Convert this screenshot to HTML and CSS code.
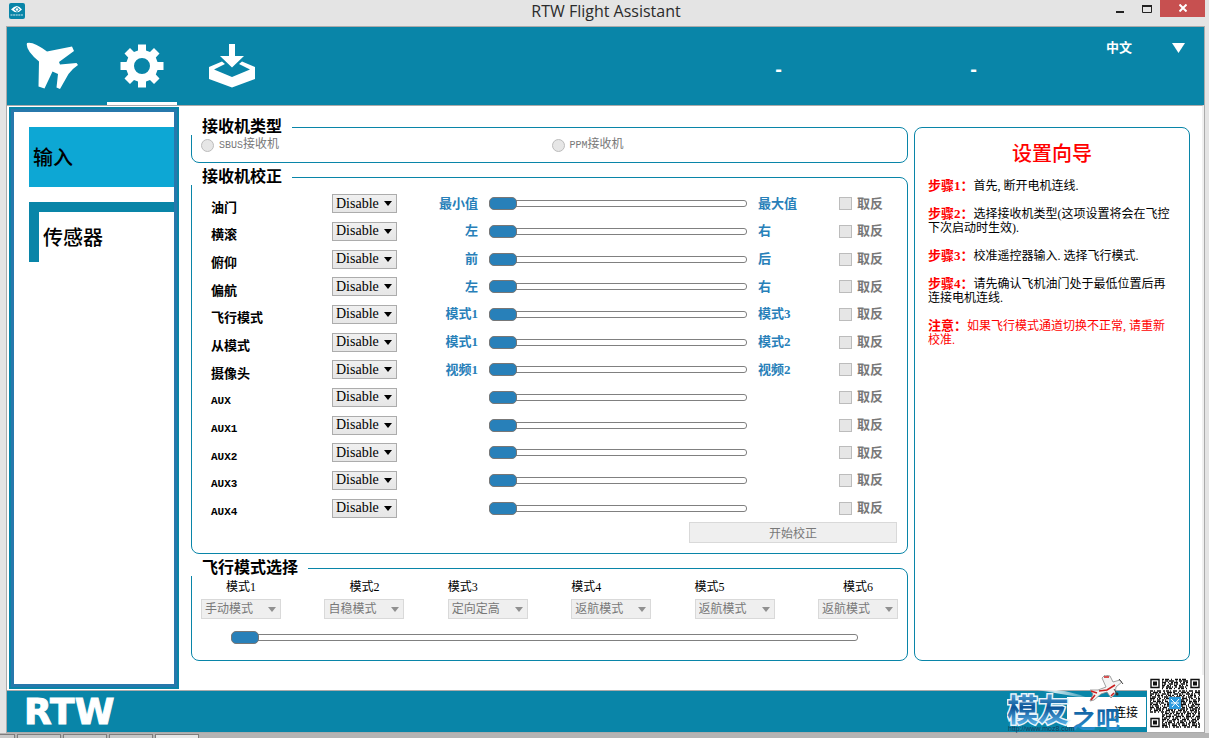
FILE: index.html
```html
<!DOCTYPE html>
<html lang="zh-CN">
<head>
<meta charset="utf-8">
<title>RTW Flight Assistant</title>
<link rel="stylesheet" href="styles.css">
</head>
<body>
<div class="window">
  <header class="titlebar">
    <svg class="app-icon" viewBox="0 0 16 16" aria-hidden="true"><rect width="16" height="16" rx="2" fill="#0985a8"/><path d="M2 6.500Q8-.5 13 6.500Q8 12 2 6.500Z" fill="#fff"/><path d="M5 6.500 8 4l3 2.500L8 9Z" fill="#0985a8"/><circle cx="8" cy="6.500" r="1.300" fill="#fff"/><path d="M1.500 12h13" stroke="#cfe8ef" stroke-width="1.200" stroke-dasharray="2 .6"/></svg>
    <h1 class="window-title">RTW Flight Assistant</h1>
    <div class="window-buttons">
      <button class="win-btn" type="button" aria-label="Minimize"><svg width="10" height="12"><path d="M1 10h8" stroke="#222" stroke-width="2"/></svg></button>
      <button class="win-btn" type="button" aria-label="Maximize"><svg width="10" height="12"><path d="M.5 4v6.500h9V4" fill="none" stroke="#222"/><path d="M0 4h10" stroke="#222" stroke-width="2"/></svg></button>
      <button class="win-btn close" type="button" aria-label="Close"><svg width="8" height="8"><path d="M.5.500l7 7M7.500.500l-7 7" stroke="#fff" stroke-width="2"/></svg></button>
    </div>
  </header>

  <div class="client">
    <div class="toolbar">
      <nav class="tabs">
        <button class="tab" type="button" aria-label="Flight"><svg width="52" height="48" viewBox="0 0 52 48"><path d="M1 1Q7-1 21 9.500L46 4.500 48 9 33 20 34 22.500 50.500 21 52 23Q46 27 42.500 32L34 47 30.500 45.500 32 32 26.500 29.500 18.500 46.500 12.500 44.500 13 19.500Q-1 8 1 1Z"/></svg></button>
        <button class="tab active" type="button" aria-label="Settings"><svg width="44" height="44" viewBox="-22 -22 44 44"><path fill-rule="evenodd" d="M-4-21.500H4V-15.500L8-14 12-18 17.500-12.500 13.800-8.500 15.500-4H21.500V4H15.500L13.800 8.500 17.500 12.500 12 18 8 14 4 15.500V21.500H-4V15.500L-8 14-12 18-17.500 12.500-13.800 8.500-15.500 4H-21.500V-4H-15.500L-13.800-8.500-17.500-12.500-12-18-8-14-4-15.500ZM8 0A8 8 0 1 0-8 0 8 8 0 1 0 8 0Z"/></svg></button>
        <button class="tab" type="button" aria-label="Download"><svg width="46" height="44" viewBox="0 0 46 44"><path d="M20 0h6v12h9L23 23.500 11 12h9ZM0 23 13 17.500 16 20 5 25.500 23 33 41 25.500 30 20 33 17.500 46 23V35L23 43.500 0 35Z"/></svg></button>
      </nav>
      <div class="readouts"><span>-</span><span>-</span></div>
      <select class="language" aria-label="Language"><option>中文</option></select>
    </div>

    <main class="content">
      <nav class="sidebar">
        <button class="side-item active" type="button">输入</button>
        <button class="side-item" type="button">传感器</button>
      </nav>

      <div class="panels">
        <fieldset class="group receiver-types">
          <legend>接收机类型</legend>
          <label class="option"><input type="radio" name="receiver" disabled><span><span class="mono">SBUS</span>接收机</span></label>
          <label class="option"><input type="radio" name="receiver" disabled><span><span class="mono">PPM</span>接收机</span></label>
        </fieldset>

        <fieldset class="group calibration">
          <legend>接收机校正</legend>
          <div class="channels">
            <div class="channel"><label class="name" for="c1">油门</label><select class="combo" id="c1"><option>Disable</option></select><span class="low">最小值</span><input class="slider" type="range" value="0" aria-label="油门"><span class="high">最大值</span><label class="invert"><input type="checkbox" disabled>取反</label></div>
            <div class="channel"><label class="name" for="c2">横滚</label><select class="combo" id="c2"><option>Disable</option></select><span class="low">左</span><input class="slider" type="range" value="0" aria-label="横滚"><span class="high">右</span><label class="invert"><input type="checkbox" disabled>取反</label></div>
            <div class="channel"><label class="name" for="c3">俯仰</label><select class="combo" id="c3"><option>Disable</option></select><span class="low">前</span><input class="slider" type="range" value="0" aria-label="俯仰"><span class="high">后</span><label class="invert"><input type="checkbox" disabled>取反</label></div>
            <div class="channel"><label class="name" for="c4">偏航</label><select class="combo" id="c4"><option>Disable</option></select><span class="low">左</span><input class="slider" type="range" value="0" aria-label="偏航"><span class="high">右</span><label class="invert"><input type="checkbox" disabled>取反</label></div>
            <div class="channel"><label class="name" for="c5">飞行模式</label><select class="combo" id="c5"><option>Disable</option></select><span class="low">模式1</span><input class="slider" type="range" value="0" aria-label="飞行模式"><span class="high">模式3</span><label class="invert"><input type="checkbox" disabled>取反</label></div>
            <div class="channel"><label class="name" for="c6">从模式</label><select class="combo" id="c6"><option>Disable</option></select><span class="low">模式1</span><input class="slider" type="range" value="0" aria-label="从模式"><span class="high">模式2</span><label class="invert"><input type="checkbox" disabled>取反</label></div>
            <div class="channel"><label class="name" for="c7">摄像头</label><select class="combo" id="c7"><option>Disable</option></select><span class="low">视频1</span><input class="slider" type="range" value="0" aria-label="摄像头"><span class="high">视频2</span><label class="invert"><input type="checkbox" disabled>取反</label></div>
            <div class="channel"><label class="name aux" for="c8">AUX</label><select class="combo" id="c8"><option>Disable</option></select><span class="low"></span><input class="slider" type="range" value="0" aria-label="AUX"><span class="high"></span><label class="invert"><input type="checkbox" disabled>取反</label></div>
            <div class="channel"><label class="name aux" for="c9">AUX1</label><select class="combo" id="c9"><option>Disable</option></select><span class="low"></span><input class="slider" type="range" value="0" aria-label="AUX1"><span class="high"></span><label class="invert"><input type="checkbox" disabled>取反</label></div>
            <div class="channel"><label class="name aux" for="c10">AUX2</label><select class="combo" id="c10"><option>Disable</option></select><span class="low"></span><input class="slider" type="range" value="0" aria-label="AUX2"><span class="high"></span><label class="invert"><input type="checkbox" disabled>取反</label></div>
            <div class="channel"><label class="name aux" for="c11">AUX3</label><select class="combo" id="c11"><option>Disable</option></select><span class="low"></span><input class="slider" type="range" value="0" aria-label="AUX3"><span class="high"></span><label class="invert"><input type="checkbox" disabled>取反</label></div>
            <div class="channel"><label class="name aux" for="c12">AUX4</label><select class="combo" id="c12"><option>Disable</option></select><span class="low"></span><input class="slider" type="range" value="0" aria-label="AUX4"><span class="high"></span><label class="invert"><input type="checkbox" disabled>取反</label></div>
          </div>
          <button class="start" type="button" disabled>开始校正</button>
        </fieldset>

        <fieldset class="group flight-modes">
          <legend class="wide">飞行模式选择</legend>
          <div class="modes">
            <div class="mode centered"><label for="m1">模式1</label><select class="combo" id="m1" disabled><option>手动模式</option></select></div>
            <div class="mode centered"><label for="m2">模式2</label><select class="combo" id="m2" disabled><option>自稳模式</option></select></div>
            <div class="mode"><label for="m3">模式3</label><select class="combo" id="m3" disabled><option>定向定高</option></select></div>
            <div class="mode"><label for="m4">模式4</label><select class="combo" id="m4" disabled><option>返航模式</option></select></div>
            <div class="mode"><label for="m5">模式5</label><select class="combo" id="m5" disabled><option>返航模式</option></select></div>
            <div class="mode centered"><label for="m6">模式6</label><select class="combo" id="m6" disabled><option>返航模式</option></select></div>
          </div>
          <div class="mode-slider"><input class="slider" type="range" value="0" aria-label="飞行模式选择"></div>
        </fieldset>
      </div>

      <aside class="guide">
        <h2>设置向导</h2>
        <p><b>步骤1：</b>首先, 断开电机连线.</p>
        <p><b>步骤2：</b>选择接收机类型(这项设置将会在飞控下次启动时生效).</p>
        <p><b>步骤3：</b>校准遥控器输入. 选择飞行模式.</p>
        <p><b>步骤4：</b>请先确认飞机油门处于最低位置后再连接电机连线.</p>
        <p class="warning"><b>注意：</b>如果飞行模式通道切换不正常, 请重新校准.</p>
      </aside>
    </main>

    <footer class="footer">
      <span class="brand">RTW</span>
      <button class="connect" type="button">连接</button>
      <div class="watermark">
        <svg width="197" height="61" viewBox="0 0 197 61">
          <defs>
            <linearGradient id="ink" x1="0" y1="0" x2="0" y2="1"><stop offset="0.100" stop-color="#5fb4e6"/><stop offset=".5" stop-color="#0d5598"/><stop offset=".9" stop-color="#5cb6ea"/></linearGradient>
            <linearGradient id="ink2" x1="0" y1="0" x2="0" y2="1"><stop offset="0.200" stop-color="#0f5b9c"/><stop offset=".9" stop-color="#2a93d2"/></linearGradient>
            <linearGradient id="shine" x1="0" y1="0" x2="1" y2="0"><stop offset="0" stop-color="#fff" stop-opacity="0"/><stop offset=".4" stop-color="#fff" stop-opacity=".8"/><stop offset="1" stop-color="#fff" stop-opacity=".1"/></linearGradient>
          </defs>
          <path d="M24 14Q55 12 84 24Q60 20 24 14Z" fill="url(#shine)"/>
          <text class="mark-big" x="0" y="46">模友</text>
          <text class="mark-small" x="65" y="53">之吧</text>
          <text class="mark-url" x="1" y="56">http://www.moz8.com</text>
          <path d="M99 12 95 3 98 0 103 1 106 7 113 5 115 7 109 12 108 19 104 23 100 17 94 19 87 25 83 26 86 19 83 15 91 15Z" fill="#f4f4f4" stroke="#8a8a8a" stroke-width=".8"/>
          <path d="M84 16l6 2M84 25l4-5M92 16l8-1 8-5M97 2l5 0M104 21l3-3" stroke="#cc1f1f" stroke-width="1.600" fill="none"/>
          <path d="M112 4l4 5M107 14l3 5" stroke="#444" stroke-width="1"/><circle cx="110" cy="19" r="1.500" fill="#333"/>
          <rect x="140" y="0" width="57" height="57" fill="#fff"/>
          <g fill="none" stroke="#111" stroke-width="1.400">
            <path d="M155 4.500h26" stroke-dasharray="2 1 4 2 1 3 3 1"/><path d="M155 6h26" stroke-dasharray="1 2 3 1 5 2"/><path d="M155 7.500h26" stroke-dasharray="4 2 1 2 2 1"/><path d="M155 9h26" stroke-dasharray="1 1 2 3 4 1"/><path d="M155 10.500h26" stroke-dasharray="3 2 2 1 1 3"/><path d="M155 12h26" stroke-dasharray="2 2 5 1 1 2"/><path d="M155 13.500h26" stroke-dasharray="1 3 2 1 3 2"/>
            <path d="M143 16h50" stroke-dasharray="3 1 1 2 4 2 2 1"/><path d="M143 17.500h50" stroke-dasharray="1 2 5 1 2 3"/><path d="M143 19h50" stroke-dasharray="4 1 2 1 1 3"/><path d="M143 20.500h50" stroke-dasharray="2 3 1 1 3 1"/><path d="M143 22h50" stroke-dasharray="1 1 4 2 2 2"/><path d="M143 23.500h50" stroke-dasharray="5 2 1 1 2 3 1 1"/><path d="M143 25h50" stroke-dasharray="2 1 1 3 3 2"/><path d="M143 26.500h50" stroke-dasharray="1 2 3 1 4 1"/><path d="M143 28h50" stroke-dasharray="3 3 2 1 1 1"/><path d="M143 29.500h50" stroke-dasharray="2 1 5 2 1 3"/><path d="M143 31h50" stroke-dasharray="1 1 1 2 4 3"/><path d="M143 32.500h50" stroke-dasharray="4 2 3 1 1 2"/><path d="M143 34h50" stroke-dasharray="2 2 1 1 5 1"/><path d="M143 35.500h50" stroke-dasharray="1 3 4 1 2 1"/><path d="M143 37h50" stroke-dasharray="3 1 2 2 1 2"/>
            <path d="M155 38.500h38" stroke-dasharray="1 2 4 1 2 1"/><path d="M155 40h38" stroke-dasharray="3 1 1 2 2 3"/><path d="M155 41.500h38" stroke-dasharray="2 2 5 1"/><path d="M155 43h38" stroke-dasharray="1 1 3 2 1 3"/><path d="M155 44.500h38" stroke-dasharray="4 1 2 3"/><path d="M155 46h38" stroke-dasharray="2 3 1 1 3 1"/><path d="M155 47.500h38" stroke-dasharray="1 2 2 1 4 2"/><path d="M155 49h38" stroke-dasharray="3 1 1 1 2 2"/><path d="M155 50.500h38" stroke-dasharray="5 2 1 2"/><path d="M155 52h38" stroke-dasharray="2 1 3 1 1 3"/>
            <path d="M144 4.500h8v8h-8ZM184 4.500h8v8h-8ZM144 43.500h8v8h-8Z"/>
          </g>
          <path d="M146 6.500h4v4h-4ZM186 6.500h4v4h-4ZM146 45.500h4v4h-4Z" fill="#111"/>
          <rect x="162" y="22" width="12" height="12" fill="#2c9ade"/><path d="M164 24l8 8M172 24l-7 8M164 28h8" stroke="#fff" fill="none"/>
        </svg>
      </div>
    </footer>
  </div>

  <div class="taskbar"><i></i><i></i><i></i><i></i><i class="current"></i></div>
</div>
</body>
</html>
```

FILE: styles.css
```css
* { box-sizing: border-box; }

body {
  margin: 0;
  background: #e4e4e4;
  color: #000;
  font: 12px/14px "Liberation Serif", "Noto Sans CJK SC", sans-serif;
}

button, select, input { font: inherit; margin: 0; }

.window { display: flex; flex-direction: column; min-height: 100vh; }

/* title bar */
.titlebar {
  display: grid;
  grid-template-columns: 1fr auto 1fr;
  align-items: start;
  height: 26px;
  padding: 0 4px 0 7px;
}
.app-icon { width: 16px; height: 16px; margin: 3px 0 0 2px; }
.window-title {
  margin: 0;
  color: #2b2b2b;
  font: 400 16px/22px "Open Sans", "Noto Sans", sans-serif;
}
.window-buttons { display: flex; justify-content: flex-end; }
.win-btn {
  display: flex;
  align-items: center;
  justify-content: center;
  width: 27px;
  height: 17px;
  padding: 0 0 2px;
  border: 0;
  background: none;
}
.win-btn.close { width: 45px; background: #c75050; }

/* client area */
.client {
  display: flex;
  flex: 1;
  flex-direction: column;
  margin: 0 4px 0 6px;
  border: 1px solid #ababab;
  background: #fff;
}

.toolbar { display: flex; height: 78px; padding: 0 18px 0 10px; background: #0985a8; }
.tabs { display: flex; gap: 20px; margin-right: auto; }
.tab {
  display: flex;
  align-items: center;
  justify-content: center;
  width: 70px;
  padding: 3px 0 0;
  border: 0;
  border-bottom: 3px solid transparent;
  background: none;
}
.tab.active { border-bottom-color: #fff; }
.tab svg { fill: #fff; }
.readouts {
  display: grid;
  grid-template-columns: 195px 195px;
  align-items: center;
  padding-top: 6px;
  color: #fff;
  font: bold 20px/20px "Liberation Sans", sans-serif;
  text-align: center;
}
.language {
  align-self: flex-start;
  width: 80px;
  height: 20px;
  margin: 11px 0 0 35px;
  padding: 0;
  border: 0;
  appearance: none;
  background: url("data:image/svg+xml,%3Csvg xmlns='http://www.w3.org/2000/svg' width='14' height='10'%3E%3Cpath d='M0 0h13L6.500 10z' fill='white'/%3E%3C/svg%3E") no-repeat right center;
  color: #fff;
  font-size: 13px;
  font-weight: bold;
}

.content {
  display: flex;
  flex: 1;
  border-top: 1px solid #ababab;
  border-right: 2px solid #f0f0f0;
}

/* sidebar */
.sidebar {
  display: flex;
  flex-direction: column;
  gap: 15px;
  width: 170px;
  margin: 1px 0 1px 2px;
  padding: 18px 3px 18px 18px;
  border: 2px solid #0985a8;
  box-shadow: inset 0 0 0 3px #2778ac;
}
.side-item {
  height: 60px;
  padding: 2px 4px 0;
  border: 0;
  background: none;
  color: #000;
  font-size: 20px;
  font-weight: 500;
  line-height: 24px;
  text-align: left;
}
.side-item.active { background: #0da7d4; }
.side-item:not(.active) { border-top: 10px solid #0985a8; border-left: 10px solid #0985a8; }

/* group boxes */
.panels {
  display: flex;
  flex: 1;
  flex-direction: column;
  gap: 14px;
  min-width: 0;
  padding: 21px 6px 29px 12px;
}
.group {
  position: relative;
  min-width: 0;
  margin: 0;
  padding: 0;
  border: 1px solid #0985a8;
  border-radius: 8px;
}
.group legend {
  position: absolute;
  top: -10px;
  left: -1px;
  width: 101px;
  height: 17px;
  padding: 0 0 0 11px;
  background: #fff;
  font-size: 16px;
  font-weight: bold;
  line-height: 17px;
}
.group legend.wide { width: 117px; }

.receiver-types {
  display: grid;
  grid-template-columns: 1fr 1fr;
  padding: 9px 5px 9px 9px;
}
.option { display: flex; align-items: center; gap: 5px; color: #787878; }
.mono { font: 10px/14px "Liberation Mono", monospace; }

input[type="radio"], input[type="checkbox"] {
  width: 13px;
  height: 13px;
  border: 1px solid #bcbcbc;
  appearance: none;
  background: #e6e6e6;
}
input[type="radio"] { border-radius: 50%; }

.calibration { display: flex; flex: 1; flex-direction: column; padding: 12px 10px 10px 19px; }
.channels { display: grid; flex: 1; grid-auto-rows: 1fr; }
.channel {
  display: grid;
  grid-template-columns: 121px 65px 81px 1fr 81px 58px;
  align-items: center;
  font-size: 13px;
  font-weight: bold;
}
.name { padding-top: 8px; }
.name.aux { font: bold 11px/14px "Liberation Mono", monospace; }
.low, .high { color: #2880b9; }
.low { text-align: right; }
.channel .slider { margin: 0 11px; }
.invert { display: flex; align-items: center; gap: 5px; color: #787878; }

.combo {
  height: 19px;
  padding: 0 0 0 3px;
  border: 1px solid #acacac;
  border-radius: 0;
  appearance: none;
  background: url("data:image/svg+xml,%3Csvg xmlns='http://www.w3.org/2000/svg' width='8' height='5'%3E%3Cpath d='M0 0h8L4 5z'/%3E%3C/svg%3E") no-repeat right 4px center, linear-gradient(#f0f0f0, #e6e6e6);
  color: #000;
  font-size: 14px;
  font-weight: normal;
  line-height: 16px;
}
.combo:disabled {
  height: 20px;
  border-color: #d9d9d9;
  background: url("data:image/svg+xml,%3Csvg xmlns='http://www.w3.org/2000/svg' width='8' height='5'%3E%3Cpath d='M0 0h8L4 5z' fill='%23909090'/%3E%3C/svg%3E") no-repeat right 4px center, #efefef;
  color: #787878;
  font-size: 12px;
  opacity: 1;
}

.slider { min-width: 0; height: 13px; appearance: none; background: none; }
.slider::-webkit-slider-runnable-track {
  height: 7px;
  border: 1px solid #808080;
  border-radius: 3px;
  background: #fff;
}
.slider::-webkit-slider-thumb {
  width: 28px;
  height: 13px;
  margin: -4px 0 0 -1px;
  border: 1px solid #777;
  border-radius: 5px;
  appearance: none;
  background: #2880b9;
}

.start {
  align-self: flex-end;
  width: 208px;
  height: 21px;
  padding: 2px 0 0;
  border: 1px solid #d9d9d9;
  background: #efefef;
  color: #787878;
}

.flight-modes { padding: 11px 9px 16px; }
.modes { display: flex; justify-content: space-between; }
.mode { display: flex; flex-direction: column; gap: 5px; width: 80px; }
.mode.centered { text-align: center; }
.mode-slider { display: flex; padding: 12px 40px 0 30px; }
.mode-slider .slider { flex: 1; }

/* guide */
.guide {
  width: 276px;
  margin: 21px 12px 29px 0;
  padding: 14px 13px;
  border: 1px solid #0985a8;
  border-radius: 8px;
}
.guide h2 {
  margin: 0 0 13px;
  color: #f00;
  font-size: 20px;
  font-weight: 500;
  line-height: 24px;
  text-align: center;
}
.guide p { margin: 0 0 14px; }
.guide b { color: #f00; font-size: 13px; }
.guide .warning { color: #f00; }

/* footer */
.footer {
  position: relative;
  display: flex;
  align-items: center;
  height: 42px;
  padding: 0 58px 0 17px;
  border-top: 1px solid #ababab;
  background: #0985a8;
}
.brand {
  margin-right: auto;
  color: #fff;
  font: bold 36px/40px "DejaVu Sans", sans-serif;
  -webkit-text-stroke: 1px #fff;
}
.connect {
  width: 79px;
  height: 30px;
  padding: 2px 8px 0;
  border: 0;
  background: #fff;
  color: #000;
  text-align: right;
}
.watermark { position: absolute; right: 0; bottom: -4px; height: 61px; pointer-events: none; }
.mark-big, .mark-small {
  fill: url(#ink);
  stroke: #e8f4fb;
  stroke-width: 3px;
  paint-order: stroke;
  font-family: "Noto Sans CJK SC", sans-serif;
  font-weight: bold;
}
.mark-big { font-size: 31px; }
.mark-small { fill: url(#ink2); font-size: 24px; stroke-width: 0; }
.mark-url { fill: #123c5a; font: 7px "Liberation Sans", sans-serif; }

/* strip of task buttons under the window */
.taskbar { display: flex; gap: 2px; height: 5px; padding-top: 1px; background: #b4b4b4; }
.taskbar i { width: 44px; border: 1px solid #7d7d7d; border-bottom: 0; background: #c8c8c8; }
.taskbar i:first-child { width: 15px; border-left: 0; }
.taskbar .current { background: #e6e6e6; }
```
